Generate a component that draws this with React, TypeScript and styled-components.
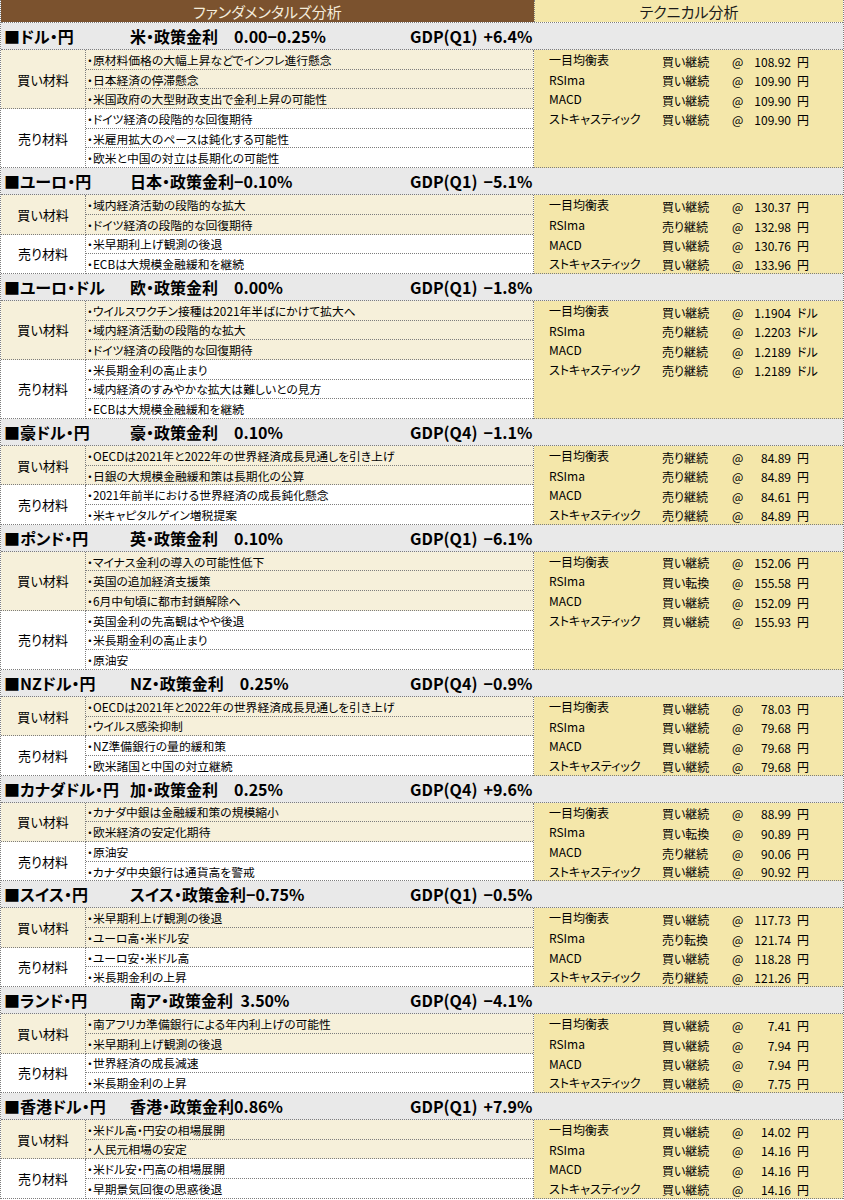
import styled, { createGlobalStyle } from "styled-components";

type Tech = { name: string; signal: string; value: string };

interface Pair {
  name: string;
  rate: string;
  gdp: string;
  gdpValue: string;
  unit: string;
  buy: string[];
  sell: string[];
  tech: Tech[];
}

const techNames = ["一目均衡表", "RSIma", "MACD", "ストキャスティック"];

const mk = (signals: string[], values: string[]): Tech[] =>
  techNames.map((name, i) => ({ name, signal: signals[i], value: values[i] }));

const pairs: Pair[] = [
  {
    name: "■ドル・円",
    rate: "米・政策金利　0.00−0.25%",
    gdp: "GDP(Q1)",
    gdpValue: "+6.4%",
    unit: "円",
    buy: ["原材料価格の大幅上昇などでインフレ進行懸念", "日本経済の停滞懸念", "米国政府の大型財政支出で金利上昇の可能性"],
    sell: ["ドイツ経済の段階的な回復期待", "米雇用拡大のペースは鈍化する可能性", "欧米と中国の対立は長期化の可能性"],
    tech: mk(["買い継続", "買い継続", "買い継続", "買い継続"], ["108.92", "109.90", "109.90", "109.90"]),
  },
  {
    name: "■ユーロ・円",
    rate: "日本・政策金利−0.10%",
    gdp: "GDP(Q1)",
    gdpValue: "−5.1%",
    unit: "円",
    buy: ["域内経済活動の段階的な拡大", "ドイツ経済の段階的な回復期待"],
    sell: ["米早期利上げ観測の後退", "ECBは大規模金融緩和を継続"],
    tech: mk(["買い継続", "売り継続", "買い継続", "買い継続"], ["130.37", "132.98", "130.76", "133.96"]),
  },
  {
    name: "■ユーロ・ドル",
    rate: "欧・政策金利　0.00%",
    gdp: "GDP(Q1)",
    gdpValue: "−1.8%",
    unit: "ドル",
    buy: ["ウイルスワクチン接種は2021年半ばにかけて拡大へ", "域内経済活動の段階的な拡大", "ドイツ経済の段階的な回復期待"],
    sell: ["米長期金利の高止まり", "域内経済のすみやかな拡大は難しいとの見方", "ECBは大規模金融緩和を継続"],
    tech: mk(["買い継続", "売り継続", "売り継続", "売り継続"], ["1.1904", "1.2203", "1.2189", "1.2189"]),
  },
  {
    name: "■豪ドル・円",
    rate: "豪・政策金利　0.10%",
    gdp: "GDP(Q4)",
    gdpValue: "−1.1%",
    unit: "円",
    buy: ["OECDは2021年と2022年の世界経済成長見通しを引き上げ", "日銀の大規模金融緩和策は長期化の公算"],
    sell: ["2021年前半における世界経済の成長鈍化懸念", "米キャピタルゲイン増税提案"],
    tech: mk(["売り継続", "売り継続", "売り継続", "売り継続"], ["84.89", "84.89", "84.61", "84.89"]),
  },
  {
    name: "■ポンド・円",
    rate: "英・政策金利　0.10%",
    gdp: "GDP(Q1)",
    gdpValue: "−6.1%",
    unit: "円",
    buy: ["マイナス金利の導入の可能性低下", "英国の追加経済支援策", "6月中旬頃に都市封鎖解除へ"],
    sell: ["英国金利の先高観はやや後退", "米長期金利の高止まり", "原油安"],
    tech: mk(["買い継続", "買い転換", "買い継続", "買い継続"], ["152.06", "155.58", "152.09", "155.93"]),
  },
  {
    name: "■NZドル・円",
    rate: "NZ・政策金利　0.25%",
    gdp: "GDP(Q4)",
    gdpValue: "−0.9%",
    unit: "円",
    buy: ["OECDは2021年と2022年の世界経済成長見通しを引き上げ", "ウイルス感染抑制"],
    sell: ["NZ準備銀行の量的緩和策", "欧米諸国と中国の対立継続"],
    tech: mk(["買い継続", "買い継続", "買い継続", "買い継続"], ["78.03", "79.68", "79.68", "79.68"]),
  },
  {
    name: "■カナダドル・円",
    rate: "加・政策金利　0.25%",
    gdp: "GDP(Q4)",
    gdpValue: "+9.6%",
    unit: "円",
    buy: ["カナダ中銀は金融緩和策の規模縮小", "欧米経済の安定化期待"],
    sell: ["原油安", "カナダ中央銀行は通貨高を警戒"],
    tech: mk(["買い継続", "買い転換", "売り継続", "買い継続"], ["88.99", "90.89", "90.06", "90.92"]),
  },
  {
    name: "■スイス・円",
    rate: "スイス・政策金利−0.75%",
    gdp: "GDP(Q1)",
    gdpValue: "−0.5%",
    unit: "円",
    buy: ["米早期利上げ観測の後退", "ユーロ高・米ドル安"],
    sell: ["ユーロ安・米ドル高", "米長期金利の上昇"],
    tech: mk(["買い継続", "売り転換", "買い継続", "売り継続"], ["117.73", "121.74", "118.28", "121.26"]),
  },
  {
    name: "■ランド・円",
    rate: "南ア・政策金利 3.50%",
    gdp: "GDP(Q4)",
    gdpValue: "−4.1%",
    unit: "円",
    buy: ["南アフリカ準備銀行による年内利上げの可能性", "米早期利上げ観測の後退"],
    sell: ["世界経済の成長減速", "米長期金利の上昇"],
    tech: mk(["買い継続", "買い継続", "買い継続", "買い継続"], ["7.41", "7.94", "7.94", "7.75"]),
  },
  {
    name: "■香港ドル・円",
    rate: "香港・政策金利0.86%",
    gdp: "GDP(Q1)",
    gdpValue: "+7.9%",
    unit: "円",
    buy: ["米ドル高・円安の相場展開", "人民元相場の安定"],
    sell: ["米ドル安・円高の相場展開", "早期景気回復の思惑後退"],
    tech: mk(["買い継続", "買い継続", "買い継続", "買い継続"], ["14.02", "14.16", "14.16", "14.16"]),
  },
];

const GlobalStyle = createGlobalStyle`
  body {
    margin: 0;
    background: #fff;
    color: #000;
    font-family: "Noto Sans CJK JP", "Noto Sans", sans-serif;
    font-feature-settings: "palt";
  }
  * { box-sizing: border-box; }
`;

const line = "1px dotted #7d7d7d";
const ROW = 19.7;

const Sheet = styled.div`
  width: 844px;
  border-left: ${line};
  border-right: ${line};
`;

const TitleRow = styled.div`
  display: grid;
  grid-template-columns: 533px 1fr;
  height: 23px;
  border-bottom: ${line};
`;

const TitleCell = styled.div<{ $tech?: boolean }>`
  display: flex;
  align-items: center;
  justify-content: center;
  font-size: 15px;
  background: ${(p) => (p.$tech ? "#f4e7aa" : "#7b522e")};
  color: ${(p) => (p.$tech ? "#1a1a1a" : "#f4ecdc")};
  border-left: ${(p) => (p.$tech ? line : "none")};
`;

const Header = styled.div`
  display: grid;
  grid-template-columns: 126px 280px 1fr;
  align-items: center;
  height: 27px;
  padding-left: 3px;
  background: #e9e9e9;
  border-bottom: ${line};
  font-size: 16px;
  font-weight: 700;
  white-space: pre;
`;

const Rate = styled.span`
  word-spacing: 4px;
`;

const GdpValue = styled.span`
  margin-left: 6px;
`;

const Body = styled.div`
  display: grid;
  grid-template-columns: 533px 1fr;
`;

const Groups = styled.div`
  display: flex;
  flex-direction: column;
  border-right: ${line};
`;

const Group = styled.div<{ $buy?: boolean }>`
  display: grid;
  grid-template-columns: 85px 1fr;
  background: ${(p) => (p.$buy ? "#f6f0da" : "#ffffff")};
`;

const SideLabel = styled.div`
  display: flex;
  align-items: center;
  justify-content: center;
  font-size: 13px;
  border-right: ${line};
  border-bottom: ${line};
`;

const Items = styled.div`
  display: flex;
  flex-direction: column;
`;

const ItemRow = styled.div`
  height: ${ROW}px;
  display: flex;
  align-items: center;
  padding-left: 1px;
  font-size: 11.8px;
  border-bottom: ${line};
  white-space: nowrap;
`;

const TechPanel = styled.div`
  background: #f4e7aa;
  border-bottom: ${line};
  padding-left: 15px;
`;

const TechLine = styled.div`
  height: ${ROW}px;
  display: grid;
  grid-template-columns: 113px 70px 20px 39px auto;
  font-size: 12px;
  white-space: nowrap;

  &:last-child {
    height: ${ROW - 1}px;
  }
`;

const TechName = styled.span`
  align-self: start;
  padding-top: 1px;
`;

const TechCell = styled.span<{ $right?: boolean }>`
  align-self: end;
  text-align: ${(p) => (p.$right ? "right" : "left")};
`;

const Unit = styled.span`
  align-self: end;
  margin-left: 6px;
`;

function Section({ pair }: { pair: Pair }) {
  return (
    <>
      <Header>
        <span>{pair.name}</span>
        <Rate>{pair.rate}</Rate>
        <span>
          {pair.gdp}
          <GdpValue>{pair.gdpValue}</GdpValue>
        </span>
      </Header>
      <Body>
        <Groups>
          <Group $buy>
            <SideLabel>買い材料</SideLabel>
            <Items>
              {pair.buy.map((t) => (
                <ItemRow key={t}>・{t}</ItemRow>
              ))}
            </Items>
          </Group>
          <Group>
            <SideLabel>売り材料</SideLabel>
            <Items>
              {pair.sell.map((t) => (
                <ItemRow key={t}>・{t}</ItemRow>
              ))}
            </Items>
          </Group>
        </Groups>
        <TechPanel>
          {pair.tech.map((t) => (
            <TechLine key={t.name}>
              <TechName>{t.name}</TechName>
              <TechCell>{t.signal}</TechCell>
              <TechCell>@</TechCell>
              <TechCell $right>{t.value}</TechCell>
              <Unit>{pair.unit}</Unit>
            </TechLine>
          ))}
        </TechPanel>
      </Body>
    </>
  );
}

export default function App() {
  return (
    <>
      <GlobalStyle />
      <Sheet>
        <TitleRow>
          <TitleCell>ファンダメンタルズ分析</TitleCell>
          <TitleCell $tech>テクニカル分析</TitleCell>
        </TitleRow>
        {pairs.map((p) => (
          <Section key={p.name} pair={p} />
        ))}
      </Sheet>
    </>
  );
}
